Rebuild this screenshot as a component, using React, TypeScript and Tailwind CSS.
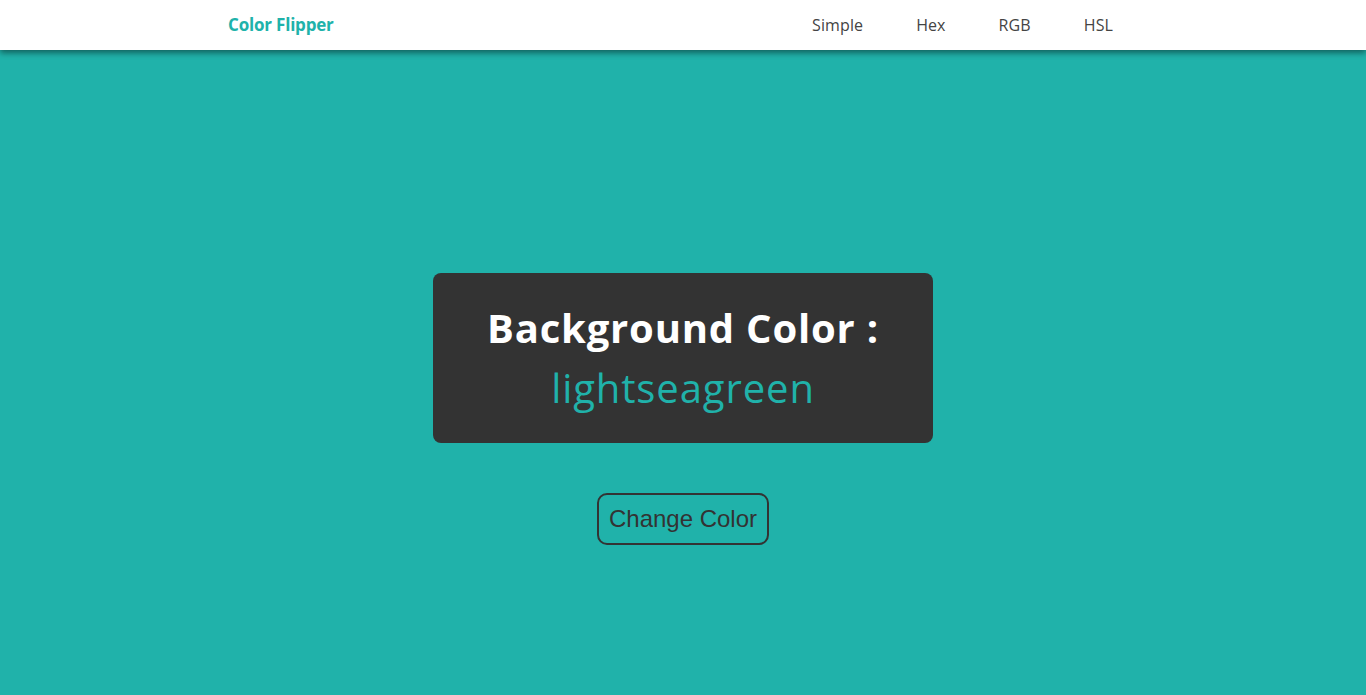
import { useState } from 'react'

const LINKS = ['Simple', 'Hex', 'RGB', 'HSL']

export default function App() {
  const [color] = useState('lightseagreen')

  return (
    <div className="min-h-screen bg-[#20b2aa] font-['Open_Sans',sans-serif]">
      {/* Navbar */}
      <nav className="relative z-10 h-[50px] bg-white shadow-[0_3px_6px_rgba(0,0,0,0.45)]">
        <div className="mx-auto flex h-full w-[910px] items-center justify-between">
          <h4 className="text-[17px] font-bold tracking-[-0.2px] text-[#20b2aa]">Color Flipper</h4>
          <ul className="flex gap-[53px] pr-[25px]">
            {LINKS.map((link) => (
              <li key={link} className="text-[16px] tracking-[0.1px] text-[#444]">
                {link}
              </li>
            ))}
          </ul>
        </div>
      </nav>

      {/* Main */}
      <main className="flex flex-col items-center pt-[223px]">
        <div className="flex h-[170px] w-[500px] flex-col items-center justify-center rounded-lg bg-[#333]">
          <h2 className="text-[40px] font-bold leading-[1.5] tracking-[0.8px] text-white">
            Background Color :
          </h2>
          <span className="text-[40px] leading-[1.5] tracking-[0.9px] text-[#20b2aa]">{color}</span>
        </div>
        <button className="mt-[50px] h-[52px] rounded-[10px] border-2 border-[#333] px-[10px] font-['Liberation_Sans',Arial,sans-serif] text-[24px] text-[#333]">
          Change Color
        </button>
      </main>
    </div>
  )
}
